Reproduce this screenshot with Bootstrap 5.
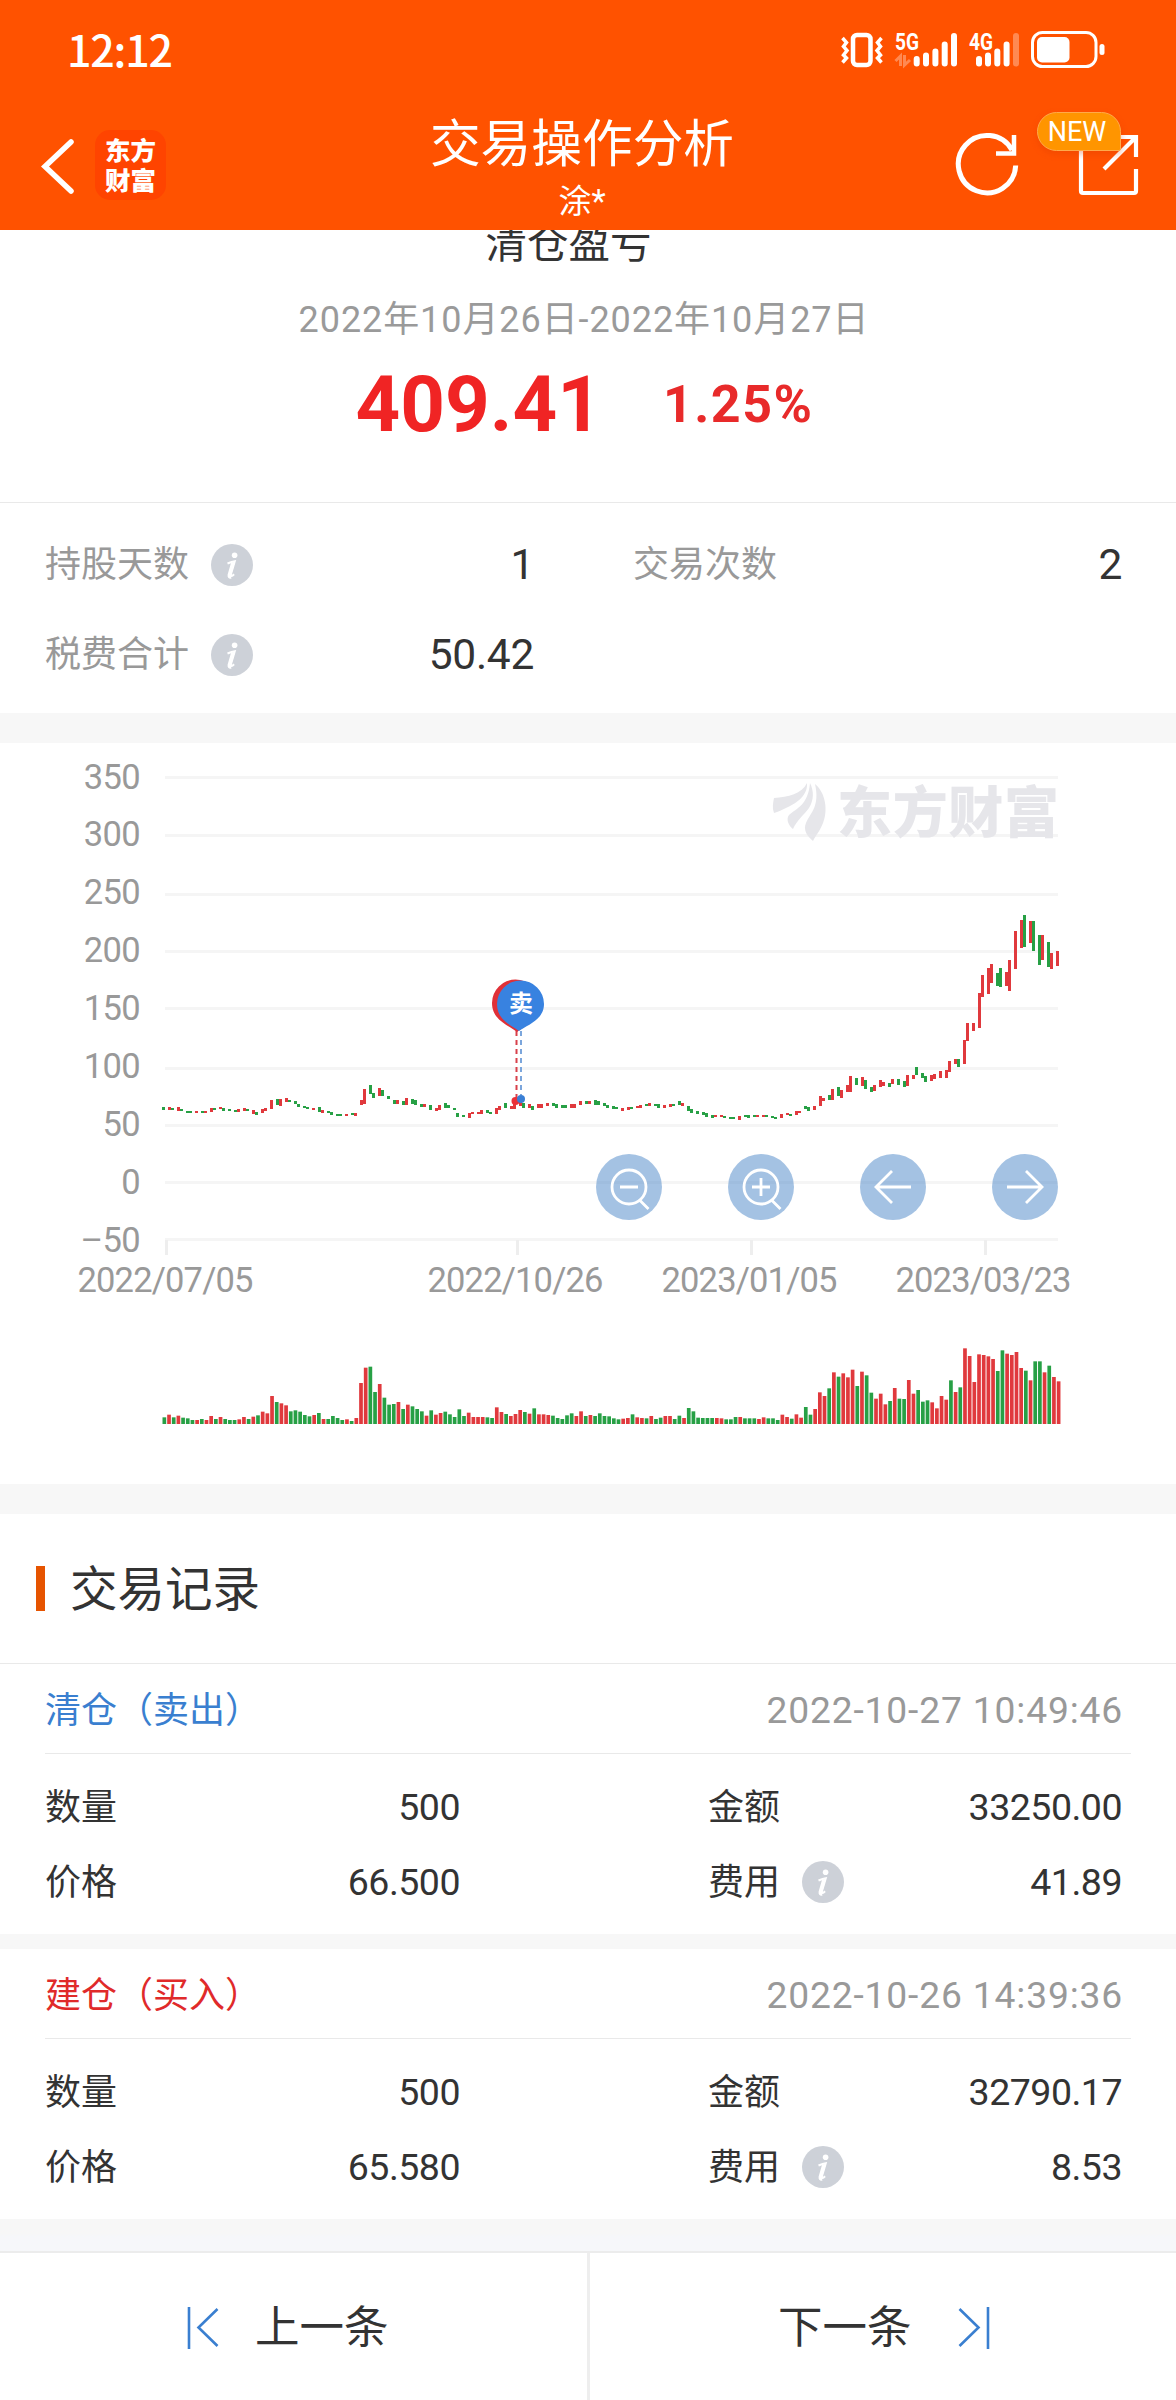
<!DOCTYPE html>
<html lang="zh-CN">
<head>
<meta charset="utf-8">
<meta name="viewport" content="width=device-width, initial-scale=1">
<title>交易操作分析</title>
<link href="https://cdn.jsdelivr.net/npm/bootstrap@5.3.0/dist/css/bootstrap.min.css" rel="stylesheet">
<style>
body{font-family:Roboto,"Noto Sans CJK SC",sans-serif;color:#333;background:#fff;width:1176px;line-height:1;overflow-x:hidden}
svg{display:block;flex:none}
.app-head{height:230px;background:#ff5200;color:#fff;position:relative;z-index:2}
.status-row{height:100px;padding:0 60px 0 67px}
.clock{font-family:"Noto Sans CJK SC",sans-serif;font-size:43px;letter-spacing:-1.2px;font-weight:500;margin-top:-4px;line-height:60px}
.nav-row{height:130px}
.nav-side{width:222px}
.back-ico{margin:36px 0 0 40px}
.logo-box{width:71px;height:70px;border-radius:15px;background:#ff4400;margin:30px 0 0 20px;font:900 25.5px/30px "Noto Sans CJK SC",sans-serif;text-align:center;padding-top:4px}
.head-mid{padding-right:12px}
.head-title{font-size:50.7px;line-height:60px;padding-top:15px}
.head-sub{font-size:33px;line-height:34px;padding-top:10px}
.refresh-ico{margin-top:30px}
.share-wrap{position:relative;width:104px;height:90px;margin:10px 0 0 15px}
.new-tag{position:absolute;left:0;top:2px;width:84px;height:39px;border-radius:20px 20px 2px 20px;background:#ff9500;border:1.5px solid #ffaa4a;font-size:27px;line-height:38px;text-align:center;box-shadow:0 3px 6px rgba(220,60,0,.35);padding-right:4px}
.summary{height:273px;border-bottom:1px solid #e9e9e9;display:flow-root}
.sum-name{font-size:41.5px;line-height:42px;margin-top:-7px;padding-right:39px}
.sum-dates{font-size:36px;line-height:50px;color:#9a9a9a;margin-top:30px;padding-right:8px;letter-spacing:.92px}
.sum-nums{margin-top:20px;gap:61px;padding-right:7px}
.red-num{color:#f02424;font-weight:700}
.big-num{font-size:78px;line-height:80px}
.pct-num{font-size:52px;line-height:80px;color:#e82a2a;letter-spacing:1.5px}
.stat-box{height:210px;padding:17px 54px 0 45px}
.stat-row{height:90px;font-size:36px;color:#999}
.stat-left{width:489px}
.stat-right{margin-left:99px}
.stat-val{font-size:42.5px;color:#333;letter-spacing:-.3px}
.info-ico{margin:-1px 0 0 22px}
.band{background:#f7f7f7;height:30px}
.band-thin{background:#f7f7f7;height:15px}
.band-foot{height:34px;background:linear-gradient(#f7f7f7 45%,#f6f7fa 55%);border-bottom:2px solid #ececec}
.chart-box{height:741px}
.sec-title{height:150px;border-bottom:1px solid #e9e9e9;padding-left:36px}
.sec-title i{width:9px;height:45px;background:#e65400;margin-right:25px}
.sec-title span{font-size:47.5px;line-height:60px;margin-top:2px}
.rec-head{height:90px;margin:0 45px;border-bottom:1px solid #e9e9e9;font-size:36px;padding:5px 8px 0 0}
.rec-time{color:#999;font-size:37.2px;letter-spacing:.85px}
.rec-body{height:180px;padding:16px 54px 0 45px;font-size:36px}
.rec-row{height:75px}
.rec-left{width:415px}
.rec-right{margin-left:248px}
.rec-val{font-size:37.5px;letter-spacing:-.5px}
.c-sell{color:#3a7fd0}.c-buy{color:#e02a2a}
.foot-btn{font-size:44.5px;height:147px;padding-top:3px}
.foot-prev{width:590px;padding-left:187px;border-right:3px solid #eee}
.foot-prev span{margin-left:36px}
.foot-next{padding-left:188px}
.foot-next span{margin-right:46px}
.foot-btn span{line-height:50px}
</style>
<script src="https://cdn.jsdelivr.net/npm/bootstrap@5.3.0/dist/js/bootstrap.bundle.min.js"></script>
</head>
<body>
<svg width="0" height="0" class="position-absolute"><defs>
<symbol id="info" viewBox="0 0 42 42"><circle cx="21" cy="21" r="21" fill="#cdd1d8"/><circle cx="23.6" cy="11.3" r="2.8" fill="#fff"/><path d="M16.5 19.5c2.500-1 4.500-1.800 7.300-2.300l-4 13.600c-.5 2 1 1.600 3.300-.6" fill="none" stroke="#fff" stroke-width="2"/><path d="M22 18.500l-3.600 12.500q-.4 2.400 1.600 1.800" fill="none" stroke="#fff" stroke-width="3.600"/></symbol>
</defs></svg>

<header class="app-head">
  <div class="status-row d-flex align-items-center justify-content-between">
    <div class="clock">12:12</div>
    <svg width="276" height="44" viewBox="841 28 276 44" fill="none" stroke="#fff">
      <rect x="854" y="35" width="17.500" height="30" rx="4" stroke-width="4.500"/>
      <path d="M843.500 38l4 4.500-3 4 3.500 4-3.500 4.500 3 3-4 4.500M882.500 38l-4 4.500 3 4-3.500 4 3.500 4.500-3 3 4 4.500" stroke-width="3.500"/>
      <g stroke-width="6" stroke-linecap="round"><path d="M917.700 59v4.500M927 55.500v8M936.400 51.500v12M945.700 44.500v19M955 36v27.500M980 59v4.500M989 55.500v8M998.300 51.500v12M1007.600 44.500v19"/><path d="M1017 36v27.500" opacity=".32"/></g>
      <path d="M896.500 61l5-5v10M905.500 55v10l5.500-5" stroke-width="3" opacity=".32"/>
      <g fill="#fff" stroke="none" font-family="Roboto" font-weight="700" font-size="23"><text x="896" y="50" textLength="24" lengthAdjust="spacingAndGlyphs">5G</text><text x="970" y="50" textLength="24" lengthAdjust="spacingAndGlyphs">4G</text></g>
      <rect x="1033.500" y="32.500" width="63.500" height="34" rx="10" stroke-width="3"/><rect x="1038" y="37" width="32.500" height="25.500" rx="5" fill="#fff" stroke="none"/><rect x="1100.500" y="44" width="5" height="11" rx="2.500" fill="#fff" stroke="none"/>
    </svg>
  </div>
  <div class="nav-row d-flex">
    <div class="nav-side d-flex">
      <svg class="back-ico" width="35" height="60" viewBox="40 136 35 60" fill="none" stroke="#fff" stroke-width="5.500"><path d="M71 142L45 166.500 71 191" stroke-linecap="round"/></svg>
      <div class="logo-box">东方<br>财富</div>
    </div>
    <div class="head-mid flex-grow-1 text-center">
      <div class="head-title">交易操作分析</div>
      <div class="head-sub">涂*</div>
    </div>
    <div class="nav-side d-flex">
      <svg class="refresh-ico" width="68" height="70" viewBox="954 130 68 70" fill="none" stroke="#fff" stroke-width="5"><path d="M1012 150A28.700 28.700 0 1 0 1015.700 165.500"/><path d="M1014 135v18.500h-18" stroke-width="4.500"/></svg>
      <div class="share-wrap">
        <svg width="104" height="90" viewBox="1037 110 104 90" fill="none" stroke="#fff" stroke-width="4.200"><path d="M1081 150v41q0 2 2 2h51q2 0 2-2v-22M1136 157v-20h-22M1104 169l31-31"/></svg>
        <div class="new-tag">NEW</div>
      </div>
    </div>
  </div>
</header>

<main>
  <section class="summary text-center">
    <div class="sum-name">清仓盈亏</div>
    <div class="sum-dates">2022年10月26日-2022年10月27日</div>
    <div class="sum-nums d-flex justify-content-center align-items-center"><span class="red-num big-num">409.41</span><span class="red-num pct-num">1.25%</span></div>
  </section>
  <section class="stat-box">
    <div class="stat-row d-flex align-items-center"><div class="stat-left d-flex align-items-center justify-content-between"><div class="d-flex align-items-center"><span>持股天数</span><svg class="info-ico" width="42" height="42"><use href="#info"/></svg></div><span class="stat-val">1</span></div><div class="stat-right d-flex align-items-center justify-content-between flex-grow-1"><span>交易次数</span><span class="stat-val">2</span></div></div>
    <div class="stat-row d-flex align-items-center"><div class="stat-left d-flex align-items-center justify-content-between"><div class="d-flex align-items-center"><span>税费合计</span><svg class="info-ico" width="42" height="42"><use href="#info"/></svg></div><span class="stat-val">50.42</span></div></div>
  </section>
  <div class="band"></div>
  <section class="chart-box">
    <svg id="chart" width="1176" height="741" viewBox="0 743 1176 741" font-family="Roboto,'Noto Sans CJK SC',sans-serif">
      <g id="grid" shape-rendering="crispEdges"></g>
      <g fill="#e6e6ea"><path d="M774 798c14-1 28-4 33-15 1 12-10 20-19 24-6 3-10 5-14 6-2-5-1-10 0-15z"/><path d="M810 783c4 8 4 17-1 25-5 7-12 12-16 21-5-4-7-10-4-14 8-7 19-10 21-32z"/><path d="M815 784c11 9 13 27 8 39-3 8-7 12-10 18-6-5-10-11-7-18 5-11 14-17 9-39z"/><text x="837" y="832" font-size="55" font-weight="900" textLength="222" font-family="Noto Sans CJK SC">东方财富</text></g>
      <g id="candles" shape-rendering="crispEdges"></g>
      <g id="volume"></g>
      <path d="M516.500 1031v68" stroke="#d8404a" stroke-width="2" stroke-dasharray="5 4"/><path d="M521 1031v64" stroke="#7ba6dc" stroke-width="2" stroke-dasharray="5 4"/>
      <circle cx="515.500" cy="1101" r="4" fill="#ea3038"/><circle cx="521" cy="1099" r="4" fill="#3a7fd5"/>
      <path d="M517 1032c-9-7-25-12-25-29a23.500 23.500 0 0 1 47 0c0 17-13 22-22 29z" fill="#e03038"/>
      <path d="M519 1031c-8-6-22-11-22-27a23.500 23.500 0 0 1 47 0c0 16-17 21-25 27z" fill="#3882e0"/>
      <text x="521" y="1012" text-anchor="middle" font-size="24" font-weight="700" fill="#fff" font-family="Noto Sans CJK SC">卖</text>
      <g fill="#4a86c8" fill-opacity=".5"><circle cx="629" cy="1187" r="33"/><circle cx="761" cy="1187" r="33"/><circle cx="893" cy="1187" r="33"/><circle cx="1025" cy="1187" r="33"/></g>
      <g fill="none" stroke="#fff" stroke-width="2.800"><circle cx="629" cy="1187" r="17"/><path d="M620 1187h18M639.500 1200l9 9"/><circle cx="761" cy="1187" r="17"/><path d="M752 1187h18M761 1178v18M771.500 1200l9 9M911 1187h-35M892 1171l-16 16 16 16M1007 1187h35M1026 1171l16 16-16 16"/></g>
    </svg>
  </section>
  <div class="band"></div>
  <section>
    <div class="sec-title d-flex align-items-center"><i></i><span>交易记录</span></div>
    <div class="rec-head d-flex align-items-center justify-content-between"><span class="c-sell">清仓（卖出）</span><span class="rec-time">2022-10-27 10:49:46</span></div>
    <div class="rec-body">
      <div class="rec-row d-flex align-items-center"><div class="rec-left d-flex justify-content-between align-items-center"><span>数量</span><span class="rec-val">500</span></div><div class="rec-right d-flex justify-content-between align-items-center flex-grow-1"><span>金额</span><span class="rec-val">33250.00</span></div></div>
      <div class="rec-row d-flex align-items-center"><div class="rec-left d-flex justify-content-between align-items-center"><span>价格</span><span class="rec-val">66.500</span></div><div class="rec-right d-flex align-items-center flex-grow-1"><span>费用</span><svg class="info-ico" width="42" height="42"><use href="#info"/></svg><span class="rec-val ms-auto">41.89</span></div></div>
    </div>
    <div class="band-thin"></div>
    <div class="rec-head d-flex align-items-center justify-content-between"><span class="c-buy">建仓（买入）</span><span class="rec-time">2022-10-26 14:39:36</span></div>
    <div class="rec-body">
      <div class="rec-row d-flex align-items-center"><div class="rec-left d-flex justify-content-between align-items-center"><span>数量</span><span class="rec-val">500</span></div><div class="rec-right d-flex justify-content-between align-items-center flex-grow-1"><span>金额</span><span class="rec-val">32790.17</span></div></div>
      <div class="rec-row d-flex align-items-center"><div class="rec-left d-flex justify-content-between align-items-center"><span>价格</span><span class="rec-val">65.580</span></div><div class="rec-right d-flex align-items-center flex-grow-1"><span>费用</span><svg class="info-ico" width="42" height="42"><use href="#info"/></svg><span class="rec-val ms-auto">8.53</span></div></div>
    </div>
  </section>
  <div class="band-foot"></div>
</main>
<footer class="d-flex">
  <div class="foot-btn foot-prev d-flex align-items-center"><svg width="32" height="44" viewBox="188 2306 32 44" fill="none" stroke="#3a7fd0" stroke-width="2.600"><path d="M190 2307v42M218.500 2309l-19 18.500 19 18.500"/></svg><span>上一条</span></div>
  <div class="foot-btn foot-next d-flex align-items-center"><span>下一条</span><svg width="32" height="44" viewBox="959 2306 32 44" fill="none" stroke="#3a7fd0" stroke-width="2.600"><path d="M989 2307v42M960.500 2309l19 18.500-19 18.500"/></svg></div>
</footer>
<script>
const NS='http://www.w3.org/2000/svg', R='#e0393d', G='#27a045';
function add(p,tag,a,t){const e=document.createElementNS(NS,tag);for(const k in a)e.setAttribute(k,a[k]);if(t)e.textContent=t;p.appendChild(e)}
const grid=document.getElementById('grid');
[777,835,894,951,1008,1068,1125,1182,1239].forEach((y,i)=>{
  add(grid,'rect',{x:165,y:y-1,width:893,height:3,fill:'#f5f5f5'});
  add(grid,'text',{x:140,y:788.5+57.9*i,'text-anchor':'end','font-size':34.5,fill:'#999','letter-spacing':-.6},String(350-50*i).replace('-','–'));
});
[[166,77.5,'2022/07/05'],[517.5,427.5,'2022/10/26'],[751.5,661.5,'2023/01/05'],[985,895.5,'2023/03/23']].forEach(d=>{
  add(grid,'rect',{x:d[0]-1.5,y:1240,width:3,height:15,fill:'#eee'});
  add(grid,'text',{x:d[1],y:1292,'font-size':34.5,fill:'#999',textLength:176},d[2]);
});
// candles: colour, x, high and low in plot units (2.8 units per pixel vertically)
const first="g290 1028 1036,r306 1028 1036,g315 1030 1036,r332 1028 1038,g340 1033 1040,g357 1038 1043,g365 1040 1043,r382 1040 1043,g399 1038 1043,r407 1040 1044,r424 1030 1042,g432 1029 1034,r449 1027 1033,g457 1030 1038,g474 1033 1038,g491 1036 1040,r499 1033 1041,r516 1031 1038,g524 1032 1040,r541 1037 1047,g549 1042 1050,r566 1032 1045,r574 1030 1038,r591 1009 1032,g608 1005 1023,r617 1005 1025,r633 1003 1014,g642 1009 1014,g658 1011 1018,g667 1018 1027,g684 1025 1031,g692 1028 1033,r710 1030 1036,g726 1028 1041,r734 1036 1043,g751 1039 1043,g760 1041 1049,g777 1047 1054,g785 1048 1053,r802 1047 1053,g819 1045 1050,r827 1044 1052,r844 1008 1022,r852 977 1019,g869 967 992,g877 988 1001,r894 975 997,g903 980 997,g920 996 1006,g936 1008 1019,r944 1008 1019,g962 1011 1021,r970 1002 1021,g987 1004 1018,g995 1009 1021,g1012 1019 1028,r1020 1019 1028,g1037 1021 1035,r1054 1029 1039,r1062 1022 1035,g1079 1017 1029,g1088 1022 1029,g1104 1030 1036,g1113 1044 1056,g1130 1050 1056,r1147 1045 1057,r1155 1042 1048,r1171 1041 1046,r1180 1036 1046,g1197 1036 1045,g1205 1041 1046,r1222 1029 1048,r1230 1025 1035,g1247 1017 1030,r1264 1024 1034,r1272 1018 1033,r1289 1010 1024,g1298 1016 1030,r1314 1018 1030,g1323 1025 1035,r1340 1019 1030,r1348 1018 1029,r1365 1016 1024,g1382 1016 1024,g1390 1020 1029,g1407 1023 1029,g1415 1021 1029,r1432 1020 1029,r1440 1018 1029,r1457 1011 1022,g1474 1012 1018,r1482 1011 1020,g1499 1009 1021,g1508 1011 1021";
const second="g12 1015 1025,g20 1021 1031,g36 1025 1033,g45 1028 1033,r61 1031 1039,r77 1028 1036,g85 1028 1033,r102 1025 1030,r110 1023 1029,g126 1018 1026,r134 1016 1025,g151 1018 1022,g159 1020 1029,r175 1021 1029,r192 1018 1027,g200 1019 1024,g216 1011 1022,r225 1016 1026,g241 1026 1040,g249 1033 1044,g265 1038 1046,g282 1042 1050,g290 1045 1055,g306 1050 1057,r314 1050 1055,r331 1051 1055,g339 1053 1057,g355 1055 1060,g363 1056 1062,r380 1052 1064,g396 1049 1055,g404 1051 1057,g420 1051 1056,r429 1051 1055,r445 1049 1054,g453 1050 1056,g470 1053 1058,g478 1055 1058,r494 1048 1058,r510 1044 1051,g518 1046 1051,r535 1040 1049,r543 1038 1043,g559 1024 1033,g567 1028 1039,r584 1024 1036,r600 996 1024,r608 1001 1012,g625 995 1007,r633 976 1007,g649 972 996,r657 979 1003,r674 966 986,r682 941 986,g698 947 967,r714 944 968,g722 952 978,g739 971 986,r747 967 982,r763 953 972,r771 958 970,g788 959 972,r796 949 962,g812 950 965,g829 956 972,r837 939 969,r853 938 949,g861 916 939,g878 932 946,g886 941 957,r902 939 954,r910 935 948,r927 928 947,r943 925 946,r951 898 930,r967 893 907,g975 894 916,r992 840 908,r1000 792 842,r1017 793 815,r1033 707 806,r1041 658 720,r1057 638 710,r1065 626 680,g1082 653 688,g1090 639 691,r1106 650 688,r1114 617 703,r1131 535 641,r1147 504 581,g1155 489 580,r1172 507 567,g1180 507 590,g1196 546 630,r1204 546 616,g1221 566 636,r1229 597 641,r1245 592 632";
const cg=document.getElementById('candles');
function draw(s,x0,k){s.split(',').forEach(c=>{const [x,a,b]=c.slice(1).split(' ').map(Number);
  add(cg,'rect',{x:Math.round(x0+x/k-1.5),y:740+a/2.8,width:3,height:Math.max(2,(b-a)/2.8),fill:c[0]=='r'?R:G})})}
draw(first,60,2.8);draw(second,600,2.722);
// traded volume, one entry per day: colour + bar top above a 282 baseline
const vol="g262 r254 g262 r257 g263 g265 g270 r270 g267 r270 r258 g267 r261 g267 g270 g270 r268 r261 g267 r260 g256 r245 r250 r198 g216 r220 r226 g244 g241 g245 g255 g259 r255 g249 r267 g267 g258 g264 g270 r268 g273 r264 r159 r113 g110 g186 r162 g203 g224 g222 r216 g237 r224 g229 g237 g244 r257 g241 r254 r249 g245 g253 g261 g238 g258 r248 r261 r261 r261 g262 g264 r232 r246 g252 r258 r252 r240 g246 r251 g235 r253 r253 r255 g257 g264 g267 g256 g250 r258 r244 g258 r255 g258 g250 g258 g259 g265 g268 r266 r264 g253 r262 r264 g265 r258 g267 g263 r258 r258 g267 g257 r264 g234 g244 g263 g264 g264 g264 r264 r265 g268 g268 g261 r261 g265 g265 g265 r267 r262 g265 g265 g270 r254 r261 g266 r253 r263 g231 g254 r237 r187 r198 g175 r127 g140 r130 r142 r119 g168 r125 g136 g188 r206 r191 r223 g213 r174 g206 g207 r150 r191 g180 g215 g211 r217 r235 r198 r209 g151 r186 g172 r55 r78 r156 r73 r75 r79 r87 g123 g61 r71 r75 r66 r114 g122 r151 g94 g94 r127 g107 r141 r154".split(' ');
const vg=document.getElementById('volume');
vol.forEach((v,i)=>{const h=(282-v.slice(1))/3;add(vg,'rect',{x:162.5+4.682*i,y:1424-h,width:3.7,height:h,fill:v[0]=='r'?R:G})});
</script>
</body>
</html>
